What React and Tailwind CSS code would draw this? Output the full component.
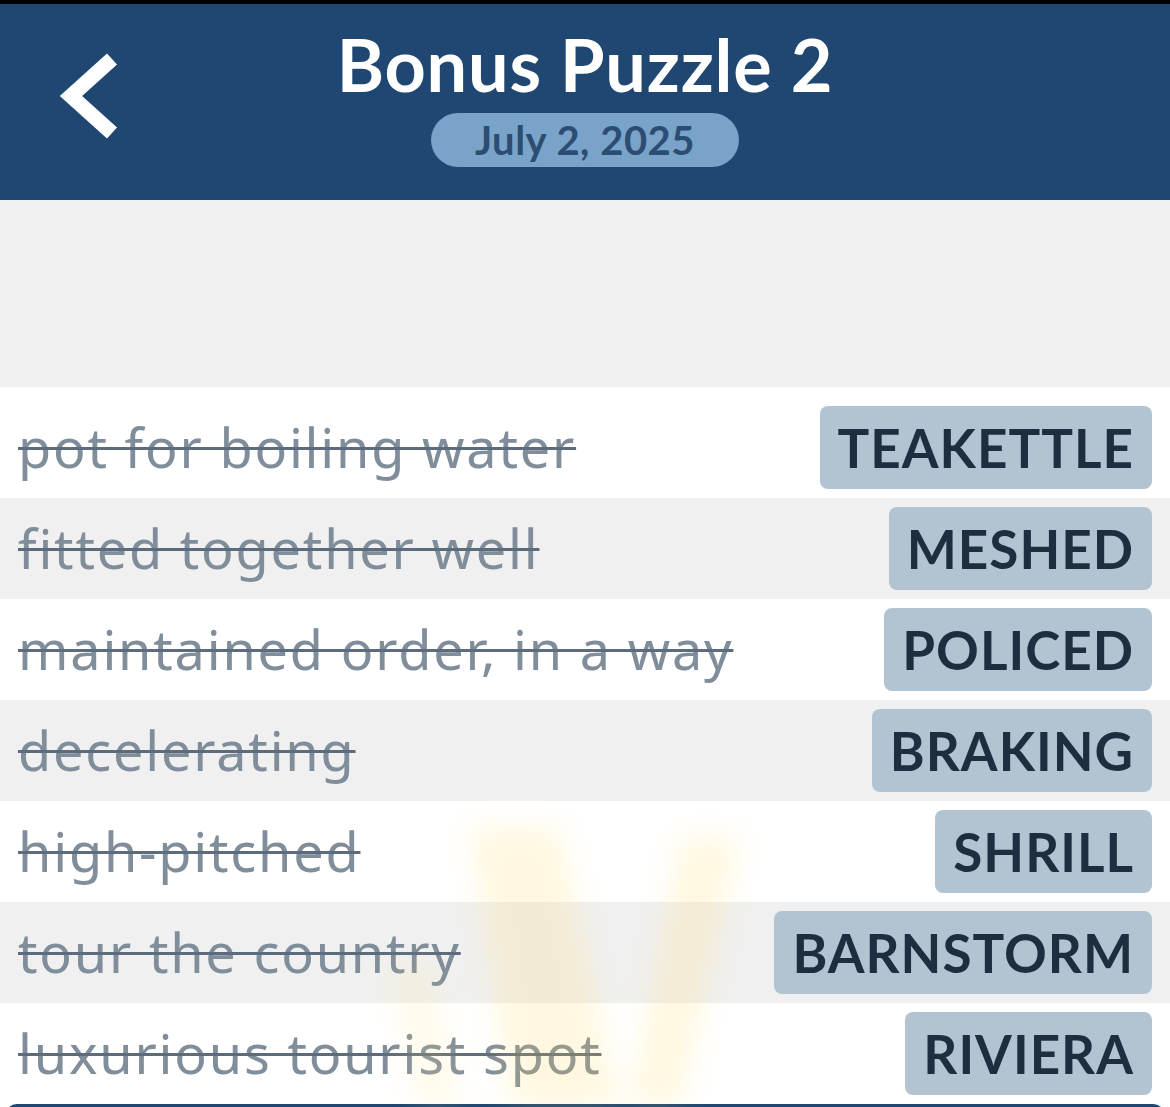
import React from 'react';

const clues = [
  { clue: 'pot for boiling water', answer: 'TEAKETTLE' },
  { clue: 'fitted together well', answer: 'MESHED' },
  { clue: 'maintained order, in a way', answer: 'POLICED' },
  { clue: 'decelerating', answer: 'BRAKING' },
  { clue: 'high-pitched', answer: 'SHRILL' },
  { clue: 'tour the country', answer: 'BARNSTORM' },
  { clue: 'luxurious tourist spot', answer: 'RIVIERA' },
];

const font = { fontFamily: 'Lato, "Noto Sans", sans-serif' };
const clueFont = { fontFamily: '"Noto Sans", Lato, sans-serif' };

const App = () => {
  return (
    <div className="w-[1170px] h-[1107px] overflow-hidden bg-[#f0f0f0]" style={font}>
      {/* status strip */}
      <div className="h-[4px] bg-black"></div>

      {/* Header */}
      <div className="h-[196px] bg-[#1f4771] grid grid-cols-[1fr_auto_1fr]">
        <div className="pl-[55px] pt-[46px]">
          <svg width="66" height="92" viewBox="0 0 66 92">
            <polyline points="57,9 16,46 57,83" fill="none" stroke="#ffffff" strokeWidth="15" strokeLinecap="butt" strokeLinejoin="miter" />
          </svg>
        </div>
        <div className="flex flex-col items-center pt-[17px]">
          <h1 className="text-white font-bold text-[72px] leading-[86px] tracking-[0.8px]">Bonus Puzzle 2</h1>
          <span className="mt-[6px] px-[44px] h-[54px] flex items-center rounded-full bg-[#79a3c8] text-[#2c4d73] font-bold text-[40px] tracking-[0.5px]">
            July 2, 2025
          </span>
        </div>
        <div></div>
      </div>

      {/* Empty space */}
      <div className="h-[187px]"></div>

      {/* Clue list */}
      <div className="relative bg-white pt-[10px]">
        {clues.map((c, i) => (
          <div
            key={c.answer}
            className={`h-[101px] flex items-center justify-between pl-[18px] pr-[18px] ${i % 2 === 1 ? 'bg-[#f0f0f0]' : 'bg-white'}`}
          >
            <span
              className="text-[54px] tracking-[1.8px] text-[#808d9a] line-through decoration-[#5d6c7c] decoration-[3px] whitespace-nowrap"
              style={clueFont}
            >
              {c.clue}
            </span>
            <span className="h-[83px] flex items-center px-[18px] rounded-[8px] bg-[#b2c4d2] text-[#1c2e40] font-bold text-[53px] tracking-[1px]">
              {c.answer}
            </span>
          </div>
        ))}

        {/* faint light rays */}
        <svg className="absolute left-0 top-[420px] pointer-events-none" width="1170" height="300" viewBox="0 0 1170 300">
          <defs>
            <filter id="blur" x="-50%" y="-50%" width="200%" height="200%">
              <feGaussianBlur stdDeviation="14" />
            </filter>
          </defs>
          <g filter="url(#blur)" opacity="0.18">
            <polygon points="470,20 560,20 620,300 510,300" fill="#ffd75a" />
            <polygon points="680,30 740,30 680,300 630,300" fill="#ffd75a" />
            <polygon points="390,160 430,160 460,300 420,300" fill="#ffe28a" />
          </g>
        </svg>

        <div className="mx-[5px] h-[20px] rounded-t-[12px] bg-[#1f4771]"></div>
      </div>
    </div>
  );
};

export default App;
